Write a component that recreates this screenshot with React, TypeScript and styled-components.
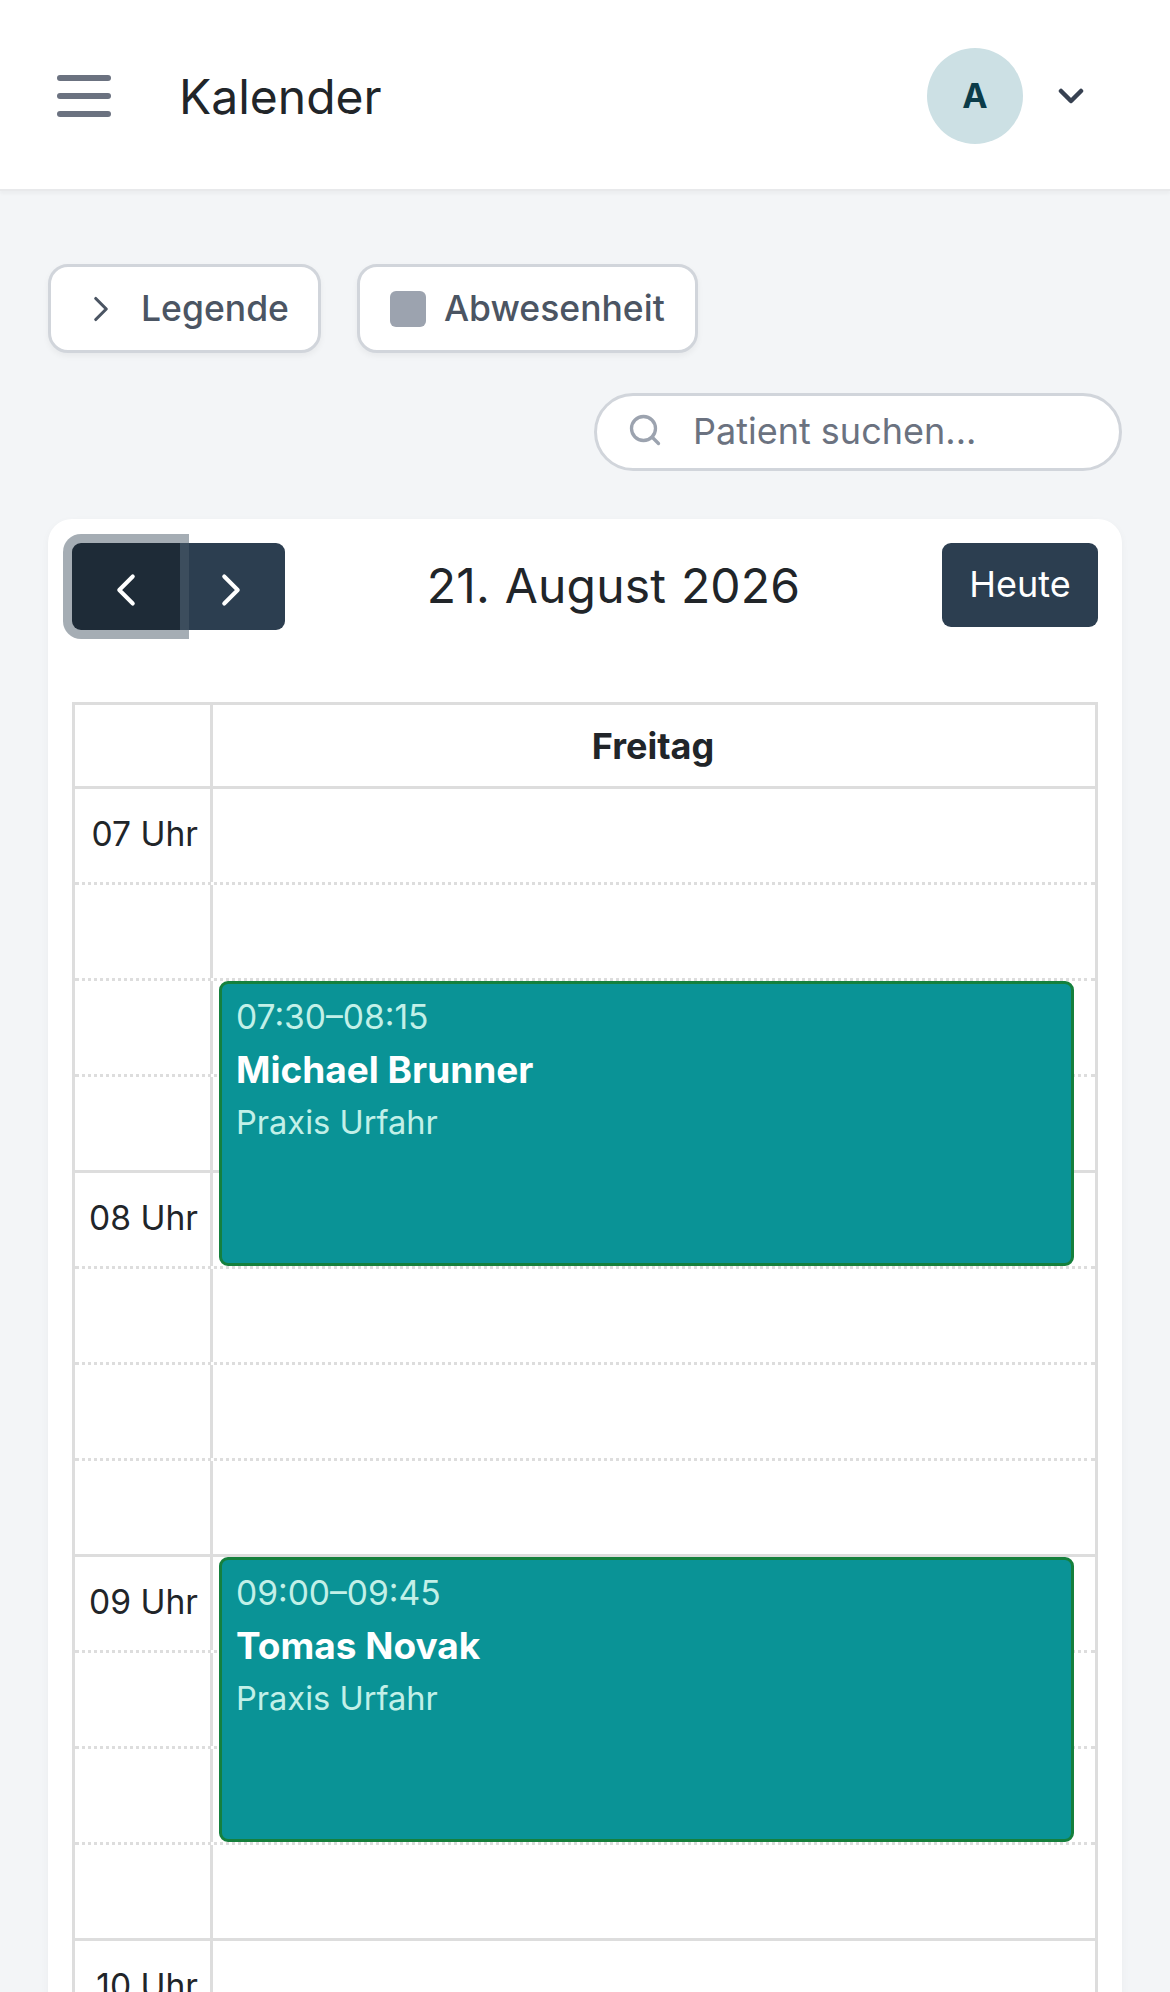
import React from 'react';
import styled, { createGlobalStyle } from 'styled-components';
import { ChevronLeft, ChevronRight, Search } from 'lucide-react';

const GlobalStyle = createGlobalStyle`
  html, body {
    margin: 0;
    padding: 0;
    background: #f3f5f7;
  }
  body {
    font-family: "Inter", "Liberation Sans", sans-serif;
    color: #212529;
  }
  * {
    box-sizing: border-box;
  }
`;

const Page = styled.div`
  width: 1170px;
  height: 1992px;
  overflow: hidden;
  background: #f3f5f7;
`;

const TopBar = styled.header`
  height: 191px;
  padding: 2px 86px 0 57px;
  display: flex;
  align-items: center;
  background: #fff;
  border-bottom: 2px solid #e8e9eb;
  box-shadow: 0 3px 3px rgba(0, 0, 0, 0.03);
`;

const BurgerIcon = styled.svg`
  width: 54px;
  height: 42px;
  flex: none;
`;

const PageTitle = styled.h1`
  margin: 2px 0 0 68px;
  flex: 1;
  font-size: 48px;
  line-height: 54px;
  font-weight: 400;
  color: #212529;
`;

const Avatar = styled.div`
  width: 96px;
  height: 96px;
  border-radius: 50%;
  background: #cce0e4;
  color: #0b3c49;
  display: flex;
  align-items: center;
  justify-content: center;
  font-size: 34px;
  font-weight: 700;
`;

const UserChevron = styled.svg`
  width: 26px;
  height: 18px;
  margin-left: 35px;
  color: #374151;
`;

const Content = styled.main`
  padding: 73px 48px 0;
`;

const ToolRow = styled.div`
  display: flex;
  gap: 36px;
`;

const ToolButton = styled.button`
  height: 89px;
  padding: 0 ${(p) => p.$right}px 0 ${(p) => p.$left}px;
  display: flex;
  align-items: center;
  gap: ${(p) => p.$gap}px;
  background: #fff;
  border: 3px solid #d1d5db;
  border-radius: 20px;
  box-shadow: 0 3px 6px rgba(0, 0, 0, 0.05);
  font-family: inherit;
  font-size: 35.5px;
  font-weight: 500;
  color: #4b5563;
`;

const GraySwatch = styled.span`
  width: 36px;
  height: 36px;
  border-radius: 6px;
  background: #9ca3af;
`;

const SearchRow = styled.div`
  margin-top: 40px;
  display: flex;
  justify-content: flex-end;
`;

const SearchBox = styled.div`
  width: 528px;
  height: 78px;
  padding-left: 30px;
  display: flex;
  align-items: center;
  gap: 30px;
  background: #fff;
  border: 3px solid #d1d5db;
  border-radius: 39px;
  font-size: 36px;
  line-height: 42px;
  color: #6b7280;
`;

const SearchIcon = styled(Search)`
  margin-bottom: 5px;
`;

const SearchText = styled.span`
  margin-bottom: 2px;
`;

const CalendarCard = styled.section`
  margin-top: 48px;
  height: 1600px;
  padding: 24px 24px 0;
  background: #fff;
  border-radius: 24px 24px 0 0;
  box-shadow: 0 3px 9px rgba(0, 0, 0, 0.04);
`;

const CalendarToolbar = styled.div`
  height: 87px;
  display: flex;
  align-items: flex-start;
`;

const NavGroup = styled.div`
  display: flex;
`;

const NavButton = styled.button`
  position: relative;
  z-index: ${(p) => (p.$active ? 1 : 0)};
  width: ${(p) => (p.$active ? 108 : 105)}px;
  height: 87px;
  padding: 6px ${(p) => (p.$active ? 0 : 3)}px 0 0;
  display: flex;
  align-items: center;
  justify-content: center;
  border: 0;
  color: #fff;
  background: ${(p) => (p.$active ? '#1e2b37' : '#2c3e50')};
  border-radius: ${(p) => (p.$active ? '9px 0 0 9px' : '0 9px 9px 0')};
  box-shadow: ${(p) => (p.$active ? '0 0 0 9px rgba(76, 91, 106, 0.5)' : 'none')};
`;

const DateTitle = styled.h2`
  margin: 15px 0 0;
  flex: 1;
  text-align: center;
  font-size: 48px;
  line-height: 56px;
  font-weight: 400;
  letter-spacing: 0.2px;
  word-spacing: 1px;
  color: #212529;
`;

const TodayButton = styled.button`
  width: 156px;
  height: 84px;
  padding: 0 0 2px;
  border: 0;
  border-radius: 9px;
  background: #2c3e50;
  color: #fff;
  font-family: inherit;
  font-size: 36px;
`;

const GridTable = styled.div`
  margin-top: 72px;
  border: solid #ddd;
  border-width: 3px 3px 0;
`;

const HeaderRow = styled.div`
  display: flex;
  height: 84px;
  border-bottom: 3px solid #ddd;
`;

const HeaderGutter = styled.div`
  width: 138px;
  border-right: 3px solid #ddd;
`;

const DayHeading = styled.div`
  flex: 1;
  display: flex;
  align-items: center;
  justify-content: center;
  padding-right: 2px;
  font-size: 36px;
  font-weight: 700;
  color: #212529;
`;

const TimeGrid = styled.div`
  position: relative;
`;

const Slot = styled.div`
  height: 96px;
  display: flex;
  border-bottom: 3px ${(p) => (p.$hourEnd ? 'solid' : 'dotted')} #ddd;
`;

const SlotLabel = styled.div`
  width: 138px;
  padding: 25px 12px 0 0;
  text-align: right;
  border-right: 3px solid #ddd;
  font-size: 33.6px;
  line-height: 40px;
  color: #212529;
`;

const EventCard = styled.article`
  position: absolute;
  top: ${(p) => p.$top}px;
  left: 144px;
  width: 855px;
  height: 285px;
  padding: 11px 14px;
  background: #0a9396;
  border: 3px solid #15803d;
  border-radius: 9px;
  color: #fff;
`;

const EventTime = styled.div`
  font-size: 33.6px;
  line-height: 44px;
  color: #c2f0e8;
`;

const EventName = styled.div`
  margin-top: 8px;
  font-size: 37px;
  line-height: 46px;
  font-weight: 700;
`;

const EventPlace = styled.div`
  margin-top: 6px;
  font-size: 32.6px;
  line-height: 46px;
  color: #c2f0e8;
`;

const hours = ['07', '08', '09', '10'];

const events = [
  { top: 192, time: '07:30–08:15', name: 'Michael Brunner', place: 'Praxis Urfahr' },
  { top: 768, time: '09:00–09:45', name: 'Tomas Novak', place: 'Praxis Urfahr' },
];

const App: React.FC = () => (
  <Page>
    <GlobalStyle />
    <TopBar>
      <BurgerIcon viewBox="0 0 54 42">
        <g fill="#6b7280">
          <rect x="0" y="0" width="54" height="6" rx="3" />
          <rect x="0" y="18" width="54" height="6" rx="3" />
          <rect x="0" y="36" width="54" height="6" rx="3" />
        </g>
      </BurgerIcon>
      <PageTitle>Kalender</PageTitle>
      <Avatar>A</Avatar>
      <UserChevron viewBox="0 0 26 18">
        <path
          d="M3 4l10 10 10-10"
          fill="none"
          stroke="currentColor"
          strokeWidth="4.5"
          strokeLinecap="round"
          strokeLinejoin="round"
        />
      </UserChevron>
    </TopBar>
    <Content>
      <ToolRow>
        <ToolButton $left={29} $right={29} $gap={19}>
          <ChevronRight size={42} strokeWidth={1.8} color="#4b5563" />
          Legende
        </ToolButton>
        <ToolButton $left={30} $right={30} $gap={18}>
          <GraySwatch />
          Abwesenheit
        </ToolButton>
      </ToolRow>
      <SearchRow>
        <SearchBox>
          <SearchIcon size={36} strokeWidth={2.2} color="#9ca3af" />
          <SearchText>Patient suchen...</SearchText>
        </SearchBox>
      </SearchRow>
      <CalendarCard>
        <CalendarToolbar>
          <NavGroup>
            <NavButton $active>
              <ChevronLeft size={54} strokeWidth={1.8} />
            </NavButton>
            <NavButton>
              <ChevronRight size={54} strokeWidth={1.8} />
            </NavButton>
          </NavGroup>
          <DateTitle>21. August 2026</DateTitle>
          <TodayButton>Heute</TodayButton>
        </CalendarToolbar>
        <GridTable>
          <HeaderRow>
            <HeaderGutter />
            <DayHeading>Freitag</DayHeading>
          </HeaderRow>
          <TimeGrid>
            {hours.map((hour) =>
              [0, 1, 2, 3].map((quarter) => (
                <Slot key={hour + quarter} $hourEnd={quarter === 3}>
                  <SlotLabel>{quarter === 0 ? `${hour} Uhr` : ''}</SlotLabel>
                </Slot>
              )),
            )}
            {events.map((event) => (
              <EventCard key={event.time} $top={event.top}>
                <EventTime>{event.time}</EventTime>
                <EventName>{event.name}</EventName>
                <EventPlace>{event.place}</EventPlace>
              </EventCard>
            ))}
          </TimeGrid>
        </GridTable>
      </CalendarCard>
    </Content>
  </Page>
);

export default App;
